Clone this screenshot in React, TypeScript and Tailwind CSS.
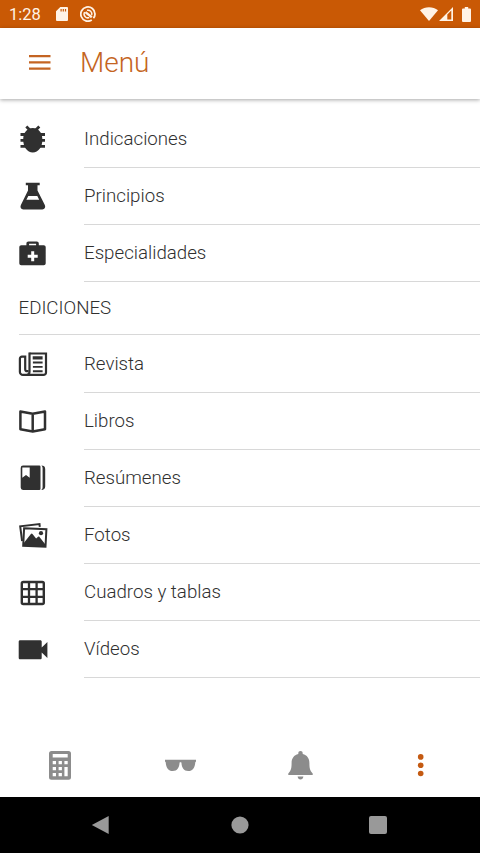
import type { ReactNode } from 'react';

interface IconProps {
  children: ReactNode;
}

function Icon({ children }: IconProps) {
  return (
    <svg width="32" height="32" viewBox="0 0 32 32" fill="currentColor" className="overflow-visible">
      {children}
    </svg>
  );
}

function BugIcon() {
  return (
    <Icon>
      <path d="M15.800 5c5.600 0 9.600 4.500 9.600 11.500 0 7.500-4 13-9.600 13s-9.600-5.500-9.600-13C6.200 9.500 10.200 5 15.800 5z" />
      <path
        d="M3.500 11.500h24.500M3.500 17.300h24.500M3.500 23.400h24.500M9.300 3.400l4 4M22.300 3.400l-4 4"
        fill="none"
        stroke="currentColor"
        strokeWidth="2.800"
      />
    </Icon>
  );
}

function FlaskIcon() {
  return (
    <Icon>
      <path
        fillRule="evenodd"
        d="M8.800 2.700h13.900v2.600h-2.200v5.200l7.200 14.300c1.200 2.600 0 4.600-2.400 4.600H6.400c-2.400 0-3.600-2-2.400-4.600l7-14.300V5.300H8.800zM11.300 16l-1.900 3.700h12.800L20.300 16z"
      />
    </Icon>
  );
}

function MedkitIcon() {
  return (
    <Icon>
      <path
        fillRule="evenodd"
        d="M9.400 8.300V6.600c0-1.200.8-2 2-2h8.400c1.200 0 2 .8 2 2v1.700h4.900c1.200 0 2 .8 2 2v16c0 1.200-.8 2-2 2H4.300c-1.200 0-2-.8-2-2v-16c0-1.200.8-2 2-2zM12.100 8.300h7V6.800h-7zM14.200 14.300v3.500h-3.500v3h3.500v3.500h3v-3.500h3.500v-3h-3.500v-3.500z"
      />
    </Icon>
  );
}

function NewspaperIcon() {
  return (
    <Icon>
      <g fill="none" stroke="currentColor" strokeWidth="2.200">
        <path d="M12.500 5.500h16.500v18.900a2.500 2.500 0 0 1-2.500 2.500H5.900a3 3 0 0 1-3-3V10.700a2 2 0 0 1 2-2h3.300v12.500a2 2 0 0 0 2 2h1.400" />
        <path d="M12.500 4.500v19.300c0 1.900-1 3.100-2.600 3.100" />
        <path d="M15.900 14.500h9.700M15.900 18.900h9.700M15.900 23.200h9.700" strokeWidth="1.900" />
      </g>
      <path d="M15.700 8.200h9.900v3.200h-9.900z" />
    </Icon>
  );
}

function BookIcon() {
  return (
    <Icon>
      <path
        fill="none"
        stroke="currentColor"
        strokeWidth="2.500"
        strokeLinejoin="round"
        d="M3.400 6.400l12.300 2.300 12.300-2.300v17.900l-12.300 2.300-12.300-2.300zM15.700 8.700v18"
      />
    </Icon>
  );
}

function BookmarkIcon() {
  return (
    <Icon>
      <path
        fillRule="evenodd"
        d="M6 3.600h16.300a1.200 1.200 0 0 1 1.200 1.200v21.900a1.200 1.200 0 0 1-1.200 1.200H6a2.300 2.300 0 0 1-2.300-2.300V5.900A2.300 2.300 0 0 1 6 3.600zM5.300 5.400v10.300l3.700-2.600 3.700 2.600V5.400z"
      />
      <path d="M24.300 3.600c2.500 0 3.900 1.200 3.900 3.300v17.600c0 2.100-1.400 3.400-3.900 3.400.9-.7 1.300-1.500 1.300-2.800V6.400c0-1.300-.4-2.100-1.300-2.800z" />
    </Icon>
  );
}

function PhotosIcon() {
  return (
    <Icon>
      <g fill="none" stroke="currentColor" strokeWidth="2">
        <path d="M5.100 22L3.200 7.300l19.300-2.200.3 2.800" />
        <path d="M7.100 9.300l22.300 1-.9 17.400-22.300-1z" />
      </g>
      <path d="M6.600 26.800l.4-3.100 6.900-8.600c.5-.7 1.100-.7 1.600 0l3.600 4.300 2-1.600c.5-.4 1-.4 1.400.2l6.100 7.700v2z" />
      <circle cx="24" cy="14.200" r="2.100" />
    </Icon>
  );
}

function GridIcon() {
  return (
    <Icon>
      <rect x="4.800" y="5" width="22" height="22" rx="1.500" fill="none" stroke="currentColor" strokeWidth="2.400" />
      <path d="M12 4.700v22.500M19.600 4.700v22.500M4.500 12.200h22.500M4.500 19.800h22.500" fill="none" stroke="currentColor" strokeWidth="2.300" />
    </Icon>
  );
}

function VideoIcon() {
  return (
    <Icon>
      <path d="M3.200 6.300h20c1 0 1.500.5 1.500 1.500v5.700l5.700-5.500v16l-5.700-5.500V23.800c0 1-.5 1.500-1.500 1.500h-20c-1 0-1.500-.5-1.500-1.500V7.800c0-1 .5-1.500 1.500-1.500z" />
    </Icon>
  );
}

function CalculatorIcon() {
  return (
    <Icon>
      <path
        fillRule="evenodd"
        d="M7.500 1h17A2.500 2.500 0 0 1 27 3.500v23.700a2.500 2.500 0 0 1-2.500 2.500h-17A2.500 2.500 0 0 1 5 27.200V3.500A2.500 2.500 0 0 1 7.500 1zM8.700 4.100v3.300h15V4.100zM8.700 10.900v3.300h3.300v-3.300zM14.600 10.900v3.300h3.300v-3.300zM20.400 10.900v3.300h3.300v-3.300zM8.700 16.900v3.300h3.300v-3.300zM14.600 16.900v3.300h3.300v-3.300zM20.400 16.900v9.400h3.300v-9.400zM8.700 23v3.300h3.300v-3.300zM14.600 23v3.300h3.300v-3.300z"
      />
    </Icon>
  );
}

function GlassesIcon() {
  return (
    <Icon>
      <path d="M1 9.700h31v1.900l-.7.600c-.4 5.700-2.600 8.900-7.100 8.900-4.400 0-6.400-3-6.800-8.500-.5-.5-1.300-.5-1.800 0-.4 5.500-2.400 8.500-6.800 8.500-4.500 0-6.700-3.200-7.100-8.900L1 11.600z" />
    </Icon>
  );
}

function BellIcon() {
  return (
    <Icon>
      <path d="M16.500 1c1.300 0 2.200.9 2.200 2.200v.8c4.400 1.100 6.700 4.400 6.700 8.900 0 4.400.3 7.400 3.300 10.500v1.600H4.300v-1.600c3-3.100 3.300-6.100 3.300-10.500 0-4.500 2.300-7.800 6.700-8.900v-.8c0-1.300.9-2.200 2.200-2.200zM13.600 26.500h5.800c-.3 1.900-1.300 2.900-2.900 2.900s-2.600-1-2.900-2.900z" />
    </Icon>
  );
}

function MoreIcon() {
  return (
    <Icon>
      <circle cx="16.700" cy="6.900" r="2.800" />
      <circle cx="16.700" cy="15.200" r="2.800" />
      <circle cx="16.700" cy="23.500" r="2.800" />
    </Icon>
  );
}

const topItems = [
  { label: 'Indicaciones', icon: <BugIcon /> },
  { label: 'Principios', icon: <FlaskIcon /> },
  { label: 'Especialidades', icon: <MedkitIcon /> },
];

const editionItems = [
  { label: 'Revista', icon: <NewspaperIcon /> },
  { label: 'Libros', icon: <BookIcon /> },
  { label: 'Resúmenes', icon: <BookmarkIcon /> },
  { label: 'Fotos', icon: <PhotosIcon /> },
  { label: 'Cuadros y tablas', icon: <GridIcon /> },
  { label: 'Vídeos', icon: <VideoIcon /> },
];

interface MenuItemProps {
  label: string;
  icon: ReactNode;
}

function MenuItem({ label, icon }: MenuItemProps) {
  return (
    <li className="flex h-[57.160px] items-center pl-[17px] text-[#303030]">
      {icon}
      <span className="ml-[35px] flex h-full flex-1 items-center border-b border-[#d8d8d8] pt-[0.400px] text-[18.700px] font-light">
        {label}
      </span>
    </li>
  );
}

function StatusBar() {
  return (
    <div className="flex h-7 items-center bg-[#c95905] text-[#fff3e6]">
      <span className="ml-[9px] w-[47px] pt-px text-[16.500px] leading-7">1:28</span>
      <svg width="12" height="14" viewBox="0 0 12 14" fill="currentColor">
        <path fillRule="evenodd" d="M4.300 0H11a1 1 0 0 1 1 1v12a1 1 0 0 1-1 1H1a1 1 0 0 1-1-1V4.300zM4.500 2v2.500h1.200V2zM6.700 2v2.500h1.200V2zM8.900 2v2.500h1.200V2z" />
      </svg>
      <svg width="16" height="16" viewBox="0 0 16 16" fill="none" stroke="currentColor" className="ml-3">
        <path d="M11.800 14A7.100 7.100 0 1 1 15 8c0 1.900-.6 3.100-1.600 4.200" strokeWidth="1.800" />
        <path d="M9.300 11.600A3.900 3.900 0 0 1 4.600 6M7 4.300A3.900 3.900 0 0 1 11.700 9" strokeWidth="1.500" />
        <path d="M5.400 6.100l6.400 5.200" strokeWidth="2.400" />
      </svg>
      <div className="ml-auto flex items-center pr-[9px]">
        <svg width="18" height="14" viewBox="0 0 18 14" fill="currentColor">
          <path d="M0 3.200C5-.8 13-.8 18 3.200L9 14z" />
        </svg>
        <svg width="14" height="14" viewBox="0 0 14 14" fill="currentColor" className="ml-px">
          <path fillRule="evenodd" d="M14 0v14H0zM8.300 7.500v5h4V3.500z" />
        </svg>
        <svg width="9" height="15" viewBox="0 0 9 15" fill="currentColor" className="ml-[9px]">
          <path d="M2.800 0h3.400v1.500H8a1 1 0 0 1 1 1V14a1 1 0 0 1-1 1H1a1 1 0 0 1-1-1V2.500a1 1 0 0 1 1-1h1.800z" />
        </svg>
      </div>
    </div>
  );
}

export default function App() {
  return (
    <div className="flex h-[853px] w-[480px] flex-col overflow-hidden bg-white font-['Roboto',sans-serif]">
      <StatusBar />
      <header className="flex h-[71px] shrink-0 items-center pb-px text-[#c46422] shadow-[0_1px_4px_rgba(0,0,0,0.350)]">
        <svg width="22" height="16" viewBox="0 0 22 16" fill="currentColor" className="ml-[29px]">
          <path d="M0 0h21.500v2.200H0zM0 6.200h21.500v2.200H0zM0 12.500h21.500v2.200H0z" />
        </svg>
        <h1 className="ml-[29px] text-[28px] font-light">Menú</h1>
      </header>

      <main className="flex-1 pt-[11.600px]">
        <ul>
          {topItems.map((item) => (
            <MenuItem key={item.label} label={item.label} icon={item.icon} />
          ))}
        </ul>
        <h2 className="ml-[18.500px] flex h-[53.300px] items-center border-b border-[#d8d8d8] text-[18.700px] font-light text-[#303030]">
          EDICIONES
        </h2>
        <ul>
          {editionItems.map((item) => (
            <MenuItem key={item.label} label={item.label} icon={item.icon} />
          ))}
        </ul>
      </main>

      <nav className="grid h-[63px] shrink-0 grid-cols-4 place-items-center text-[#8c8c8c]">
        <CalculatorIcon />
        <GlassesIcon />
        <BellIcon />
        <span className="text-[#c45a12]">
          <MoreIcon />
        </span>
      </nav>

      <div className="flex h-14 shrink-0 items-center justify-between bg-black pr-[93px] pl-[91px] text-[#999]">
        <svg width="18" height="20" viewBox="0 0 18 20" fill="currentColor">
          <path d="M17.700 1v18L.8 10z" />
        </svg>
        <svg width="18" height="18" viewBox="0 0 18 18" fill="currentColor" className="ml-0.5">
          <circle cx="9" cy="9" r="8.600" />
        </svg>
        <span className="h-[18px] w-[18px] rounded-[2px] bg-[#999]" />
      </div>
    </div>
  );
}
